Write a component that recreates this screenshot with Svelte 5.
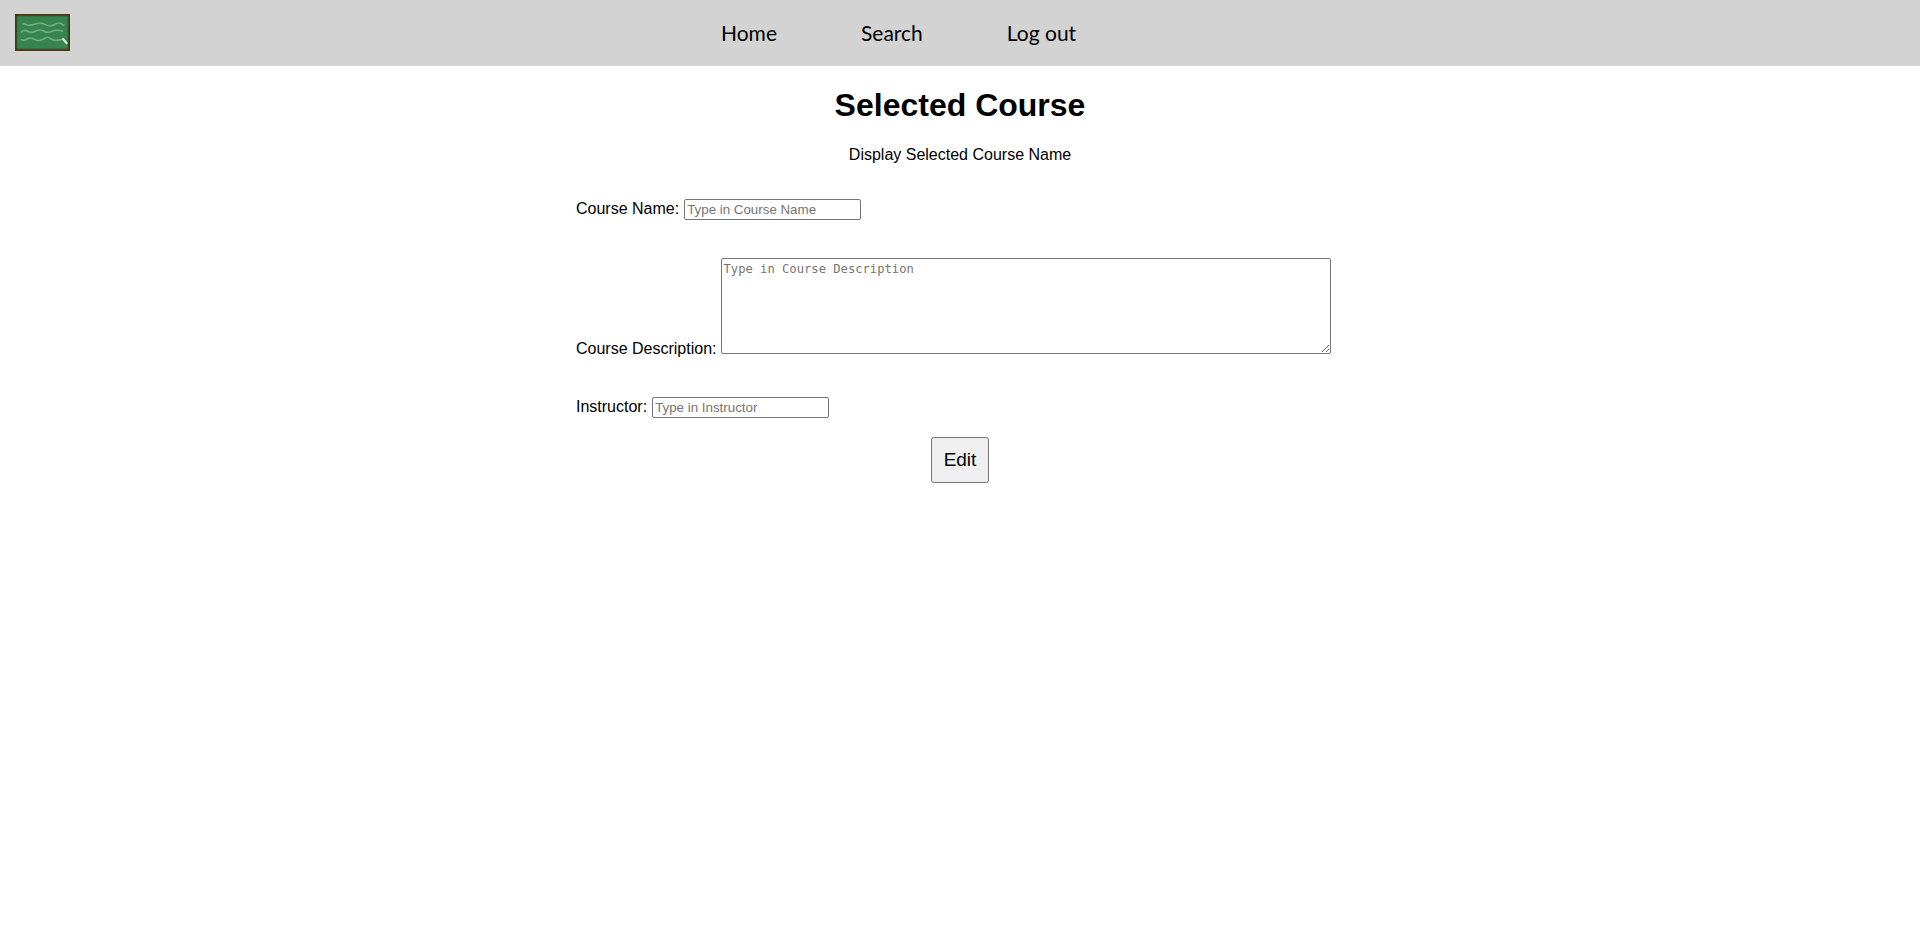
<script>
  const links = ['Home', 'Search', 'Log out'];
  let name = $state('');
  let description = $state('');
  let instructor = $state('');
</script>

<header>
  <svg class="logo" viewBox="0 0 55 37" width="55" height="37" aria-label="Chalkboard">
    <rect width="55" height="37" fill="#53330c" />
    <rect x="1.5" y="1.5" width="52" height="34" rx="1.5" fill="#2c6337" />
    <rect x="2.4" y="2.4" width="50.2" height="32.2" rx="1" fill="#36844e" />
    <g fill="none" stroke="#76ab86" stroke-width="1.6" stroke-linecap="round">
      <path d="M8 10 C10 8.8 11 11.5 14 11.3 S22 9 26 9.2 S31 12 35 12 S40 9 44 9 S47 11.5 49 11" />
      <path d="M6.5 18 C9 15.5 11 16 13 17.5 S18 18.5 21 17 S26 15.6 29 17.2 S34 18.8 37 17.3 S43 16 47.5 17" />
      <path d="M6.5 25.5 C8 27 11 25.8 13 24.5 S18 24.5 21 26 S27 26 30 24.2 S34 23.5 36 25 S43 27.2 48 25" />
    </g>
    <path d="M47.5 24.5 L52.2 29.8" stroke="#dce5dd" stroke-width="2.3" stroke-linecap="butt" />
  </svg>
  <nav>
    {#each links as link}
      <a href="#top">{link}</a>
    {/each}
  </nav>
</header>

<main>
  <h1>Selected Course</h1>
  <p>Display Selected Course Name</p>
  <form>
    <label class="first">Course Name: <input placeholder="Type in Course Name" bind:value={name} /></label>
    <label class="description">Course Description: <textarea placeholder="Type in Course Description" bind:value={description}></textarea></label>
    <label class="instructor">Instructor: <input placeholder="Type in Instructor" bind:value={instructor} /></label>
    <button type="button">Edit</button>
  </form>
</main>

<style>
  :global(body) {
    background: #fff;
    color: #000;
    font-family: Arial, "Liberation Sans", sans-serif;
    font-size: 16px;
  }
  header {
    display: flex;
    box-sizing: border-box;
    height: 66px;
    padding-top: 14px;
    padding-left: 15px;
    background: #d3d3d3;
  }
  .logo {
    flex: none;
  }
  nav {
    display: flex;
    gap: 84px;
    margin-left: 651px;
    padding-top: 5px;
    font: 21px/28px "Gill Sans", "Gill Sans MT", Lato, sans-serif;
  }
  a {
    color: #000;
    text-decoration: none;
    white-space: nowrap;
  }
  h1 {
    margin: 21px 0 0;
    font-size: 32px;
    line-height: 36px;
    text-align: center;
  }
  p {
    margin: 23px 0 0;
    line-height: 18px;
    text-align: center;
  }
  form {
    display: flex;
    flex-direction: column;
    padding-left: 576px;
  }
  label {
    display: flex;
    align-items: baseline;
    gap: 5px;
    white-space: nowrap;
  }
  input {
    box-sizing: border-box;
    width: 177px;
    height: 21px;
    margin: 0;
    padding: 2px;
    border: 1px solid #767676;
    border-radius: 2px;
    font: 13.333px Arial, "Liberation Sans", sans-serif;
  }
  .first {
    margin-top: 35px;
  }
  .description {
    align-items: flex-end;
    gap: 4px;
    margin-top: 38px;
    line-height: 10px;
  }
  textarea {
    box-sizing: border-box;
    width: 610px;
    height: 96px;
    margin: 0;
    padding: 2px;
    border: 1px solid #767676;
    border-radius: 2px;
    font: 12.17px/16px Consolas, "DejaVu Sans Mono", monospace;
  }
  .instructor {
    margin-top: 43px;
  }
  button {
    box-sizing: border-box;
    width: 58px;
    height: 46px;
    margin: 19px 0 0 355px;
    padding: 0;
    border: 1px solid #767676;
    border-radius: 3px;
    background: #efefef;
    color: #000;
    font: 19px Arial, "Liberation Sans", sans-serif;
  }
  input::placeholder,
  textarea::placeholder {
    color: #757575;
  }
</style>
